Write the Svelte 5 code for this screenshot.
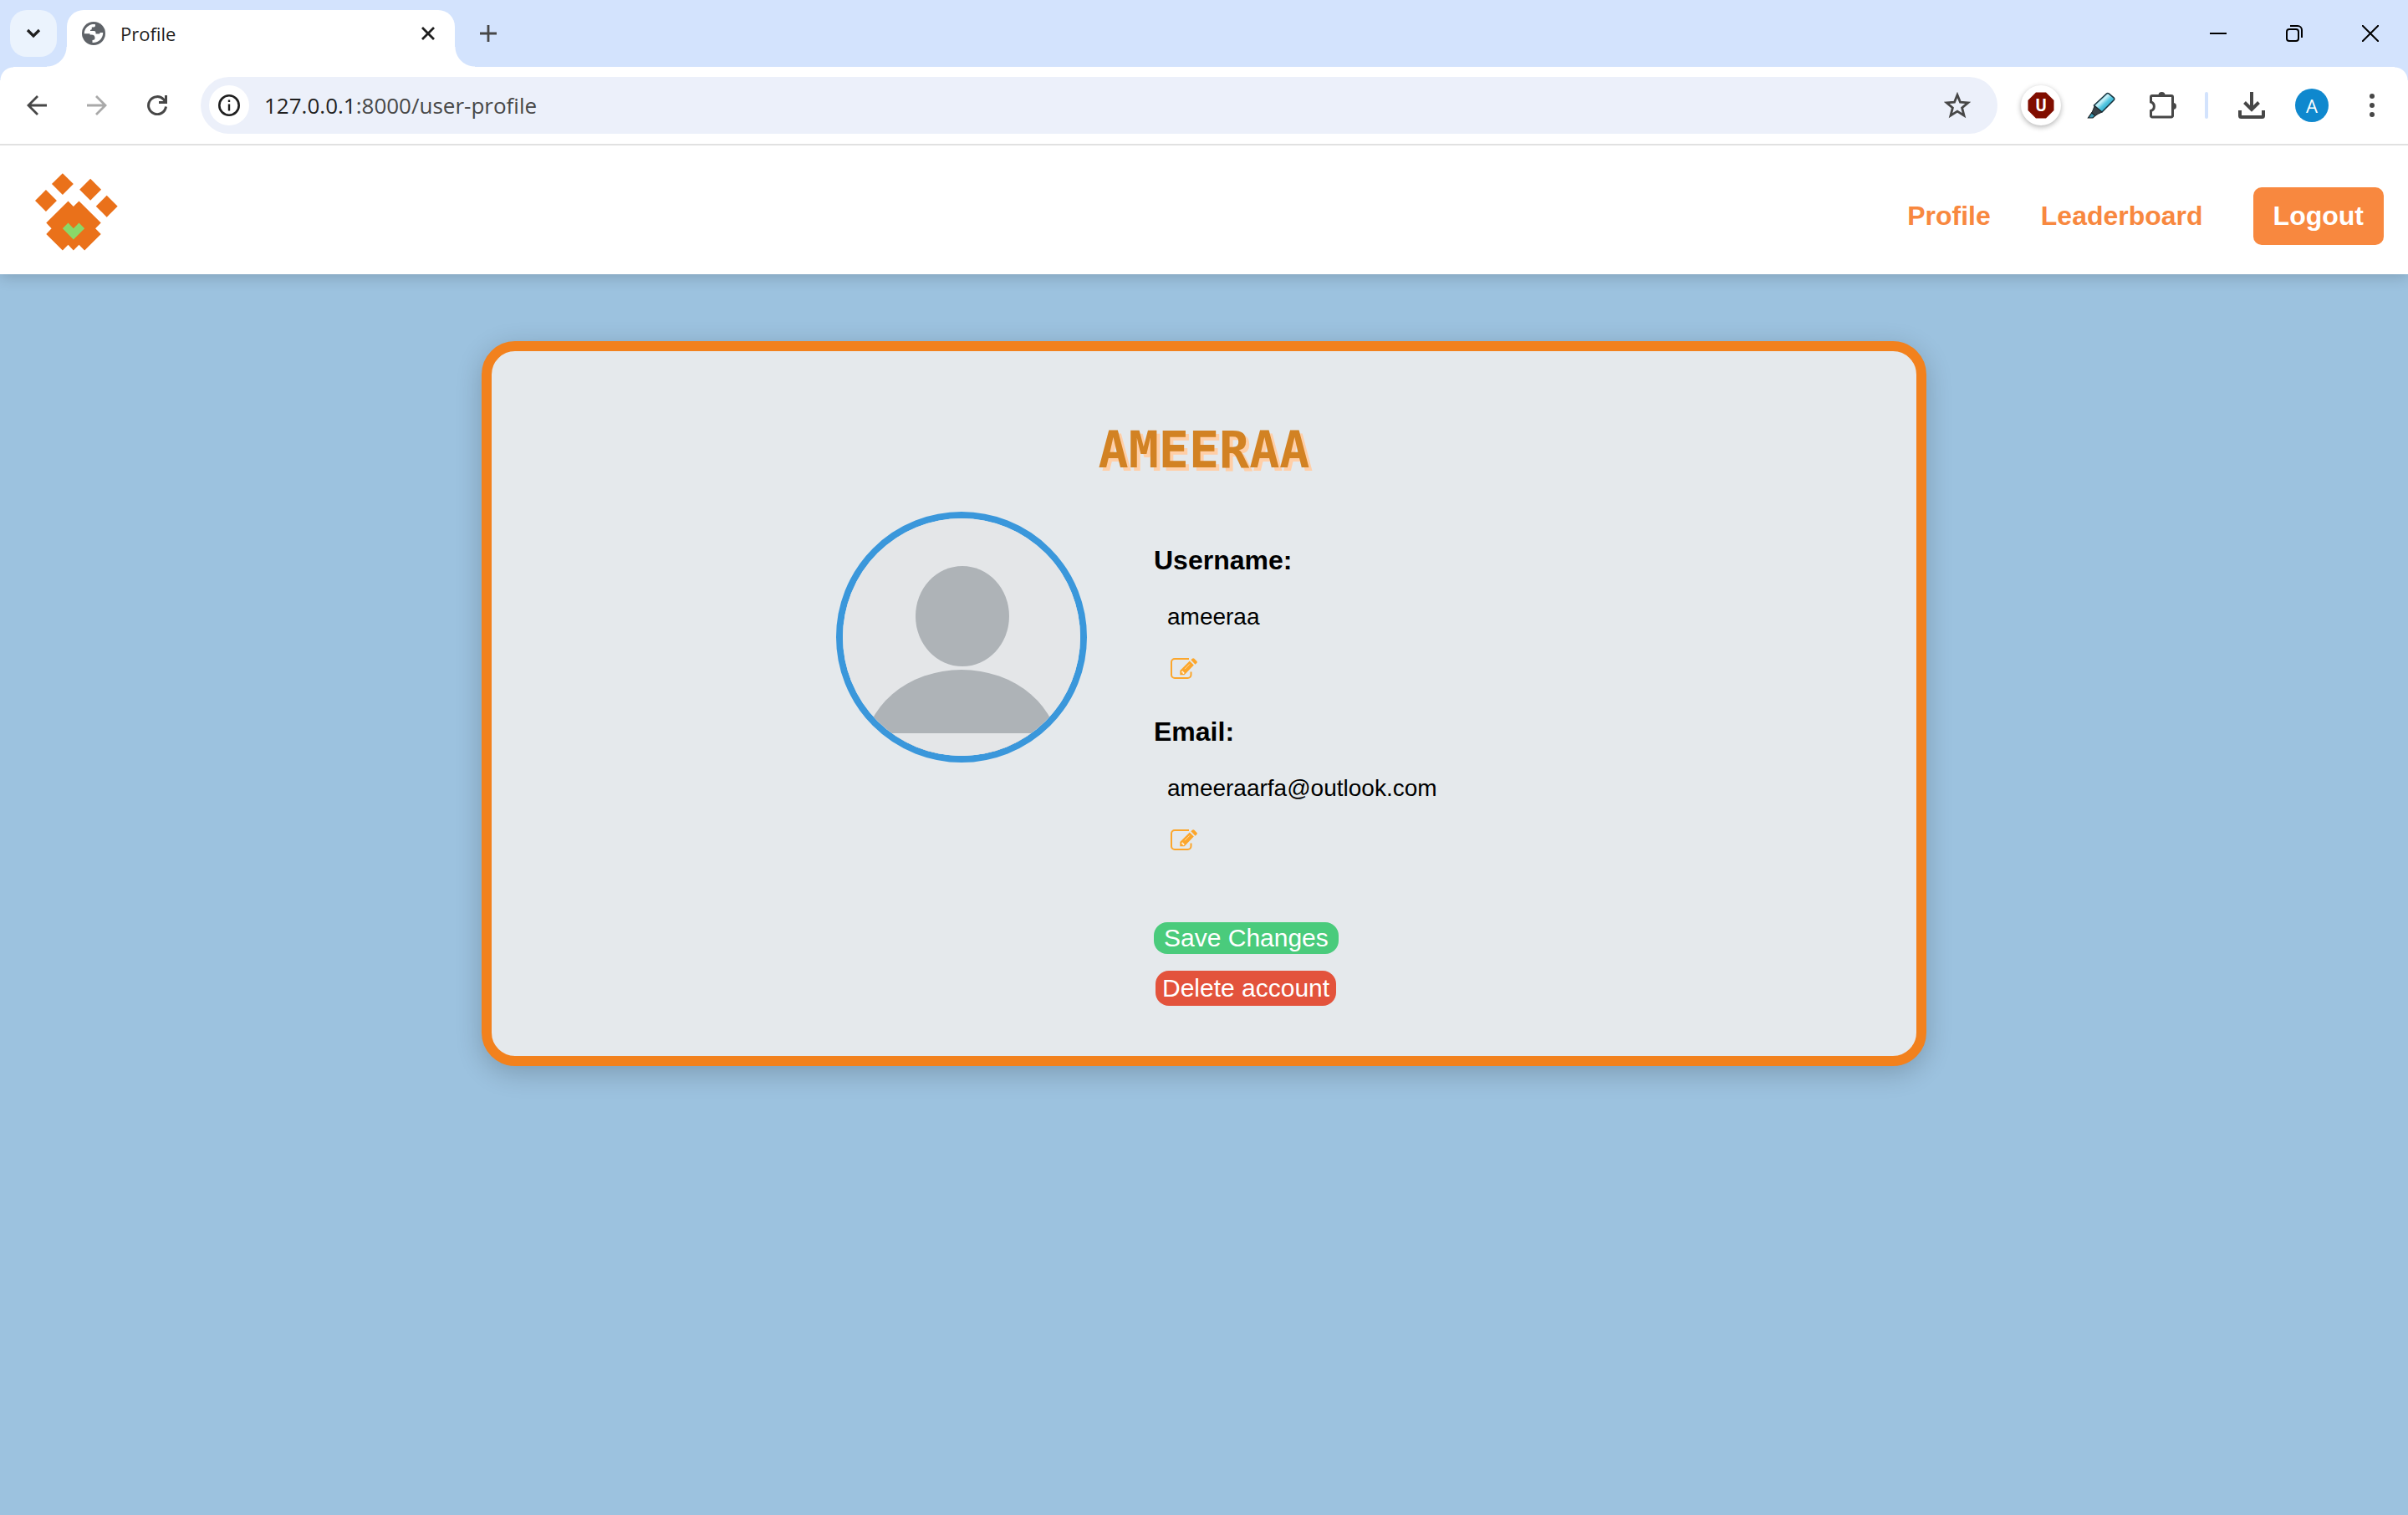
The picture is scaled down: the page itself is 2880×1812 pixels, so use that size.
<script>
  const toes = [[74, 132], [134, 72], [234, 92], [293, 152]];
  let username = $state('ameeraa');
  let email = $state('ameeraarfa@outlook.com');
</script>

{#snippet editIcon()}
  <svg width="32" height="25" viewBox="0 0 32 25" aria-hidden="true">
    <path d="M22 1H5a4 4 0 0 0-4 4v15a4 4 0 0 0 4 4h15.500a4 4 0 0 0 4-4v-3.500" fill="none" stroke="#fca62b" stroke-width="2" />
    <path d="M11.300 20.300v-5.300L22.800 3.600l5 5L16.500 20.300z" fill="#fca62b" />
    <path d="M24.300 2.300 26 .7q1.200-1 2.400 0l2.900 3q1.200 1.200 0 2.400l-1.700 1.600z" fill="#fca62b" />
    <path d="M13.200 16.200l1-.9 2.600 2.600-1 1h-1.200v-1.400h-1.400z" fill="#fff3e0" />
    <path d="M17 13.200l5.800-5.800" stroke="#fdd9a4" stroke-width="1" />
  </svg>
{/snippet}

<div class="window">
  <div class="tabstrip">
    <button class="tab-search" aria-label="Search tabs">
      <svg width="18" height="12" viewBox="0 0 18 12"><path d="M2 2l7 7 7-7" fill="none" stroke="#1f1f1f" stroke-width="3.200" /></svg>
    </button>
    <div class="tab">
      <svg width="28" height="28" viewBox="0 0 28 28" aria-hidden="true">
        <circle cx="14" cy="14" r="14" fill="#5f6368" />
        <path d="M2.700 14.200C2.700 10 5 6.600 8.500 4.500 11 3.200 13.500 2.900 16 3.200v1.300q0 2-2 2h-2.200v2q0 1.200-1.800 1.200v1.300h4.500q2 0 2 2v1.600h3.700q1.500 0 1.500-1.500h3.500C25.300 19 21 25.300 12.500 25.100V22q3 0 3-2.500 0-4-4-4H9.500v-1.300z" fill="#fff" />
      </svg>
      <span class="tab-title">Profile</span>
      <button class="tab-close" aria-label="Close tab">
        <svg width="18" height="18" viewBox="0 0 18 18"><path d="M2 2l14 14M16 2L2 16" stroke="#1f1f1f" stroke-width="2.800" /></svg>
      </button>
    </div>
    <button class="new-tab" aria-label="New tab">
      <svg width="20" height="20" viewBox="0 0 20 20"><path d="M10 0v20M0 10h20" stroke="#474747" stroke-width="2.800" /></svg>
    </button>
    <div class="window-controls">
      <button aria-label="Minimize"><svg width="20" height="20" viewBox="0 0 20 20"><path d="M0 10h20" stroke="#000" stroke-width="2" /></svg></button>
      <button aria-label="Restore">
        <svg width="20" height="20" viewBox="0 0 20 20" fill="none" stroke="#000" stroke-width="2"><rect x="1" y="5" width="14" height="14" rx="3" /><path d="M5 1h9a5 5 0 0 1 5 5v9" /></svg>
      </button>
      <button aria-label="Close"><svg width="20" height="20" viewBox="0 0 20 20"><path d="M0 0l20 20M20 0L0 20" stroke="#000" stroke-width="2" /></svg></button>
    </div>
  </div>

  <div class="toolbar">
    <button class="tool" aria-label="Back">
      <svg width="24" height="24" viewBox="0 0 24 24" fill="none" stroke="#474747" stroke-width="2.800"><path d="M24 12H2M13 1L2 12l11 11" /></svg>
    </button>
    <button class="tool" aria-label="Forward">
      <svg width="24" height="24" viewBox="0 0 24 24" fill="none" stroke="#a9a9a9" stroke-width="2.800"><path d="M0 12h22M11 1l11 11-11 11" /></svg>
    </button>
    <button class="tool" aria-label="Reload">
      <svg width="24" height="24" viewBox="0 0 24 24" fill="none" stroke="#474747" stroke-width="3"><path d="M22.500 13.500A10.500 10.500 0 1 1 19.800 5l2 3" /><path d="M22.500 0v8.500H14" /></svg>
    </button>
    <div class="omnibox">
      <button class="site-info" aria-label="View site information">
        <svg width="26" height="26" viewBox="0 0 26 26"><circle cx="13" cy="13" r="11.700" fill="none" stroke="#1f1f1f" stroke-width="2.600" /><path d="M13 11.500v8M13 6.500v2.600" stroke="#1f1f1f" stroke-width="2.400" /></svg>
      </button>
      <span class="url"><b>127.0.0.1</b>:8000/user-profile</span>
      <button class="tool" aria-label="Bookmark this tab">
        <svg width="32" height="32" viewBox="0 0 32 32"><path d="M16 3.500l3.500 8.700 9.300.7-7.200 6 2.400 9.200-8-5-8 5 2.400-9.200-7.200-6 9.300-.7z" fill="none" stroke="#474747" stroke-width="2.800" /></svg>
      </button>
    </div>
    <button class="tool" aria-label="uBlock Origin">
      <span class="ext-disc">
        <svg width="32" height="32" viewBox="0 0 32 32"><path d="M10 .5h12l9.500 9.500v12L22 31.500H10L.5 22V10z" fill="#800d00" /><text x="16" y="23" text-anchor="middle" class="shield-letter">U</text></svg>
      </span>
    </button>
    <button class="tool" aria-label="Highlighter">
      <svg width="34" height="32" viewBox="0 0 34 32">
        <defs><linearGradient id="ink" x1="0" y1="0" x2="1" y2="1"><stop offset="0.250" stop-color="#4cb4d2" /><stop offset="0.400" stop-color="#c9f1f8" /><stop offset="0.550" stop-color="#54c6e0" /><stop offset="0.800" stop-color="#1a9dc0" /></linearGradient></defs>
        <path d="M8.500 16 23.500 2q1.200-1.100 2.600-.2l6 5q1.200 1.200.3 2.700L18 24z" fill="url(#ink)" stroke="#17323c" stroke-width="1.500" />
        <path d="M9 17l9 7-4.500 2.200-3.700 2.300-4-3.500 1.500-3.500z" fill="#3a4349" stroke="#1b2327" stroke-width="1" />
        <path d="M5.700 25l4 3.500L7 31H1.500z" fill="#3999b4" stroke="#1b2327" stroke-width="1.200" />
      </svg>
    </button>
    <button class="tool" aria-label="Extensions">
      <svg width="36" height="34" viewBox="-4 0 36 34"><path d="M3 5.500h23a1.500 1.500 0 0 1 1.500 1.500v22.500a1.500 1.500 0 0 1-1.500 1.500H3a1.500 1.500 0 0 1-1.500-1.500V23.500a5.500 5.500 0 0 0 0-10.500V7A1.500 1.500 0 0 1 3 5.500z" fill="none" stroke="#474747" stroke-width="3" /><path d="M10.500 5a4 4 0 0 1 8 0zM28 14a4 4 0 0 1 0 8z" fill="#474747" /></svg>
    </button>
    <span class="divider"></span>
    <button class="tool" aria-label="Downloads">
      <svg width="32" height="32" viewBox="0 0 32 32" fill="none" stroke="#474747" stroke-width="4"><path d="M16 0v20M7.500 12.500L16 21l8.500-8.500M2 22v6.500a1.500 1.500 0 0 0 1.500 1.500h25a1.500 1.500 0 0 0 1.500-1.500V22" /></svg>
    </button>
    <button class="tool" aria-label="Account"><span class="account">A</span></button>
    <button class="tool" aria-label="Menu">
      <svg width="8" height="28" viewBox="0 0 8 28" fill="#474747"><circle cx="4" cy="3" r="3" /><circle cx="4" cy="14" r="3" /><circle cx="4" cy="25" r="3" /></svg>
    </button>
  </div>

  <header>
    <a class="logo" href="/" aria-label="Home">
      <svg width="99" height="93" viewBox="35 33 298 279">
        <g fill="#ea711a">
          {#each toes as [x, y]}
            <path d="M{x - 39} {y}l39-39 39 39-39 39z" />
          {/each}
          <path d="M154 133l19 20 20-20 79 79-20 20 20 20-59 59-20-20-20 20-19-20-20 20-59-59 19-20-19-20z" />
        </g>
        <path d="M154 212l19 20 20-20 20 20-40 40-39-40z" fill="#8ad868" />
      </svg>
    </a>
    <nav>
      <a href="/user-profile">Profile</a>
      <a href="/leaderboard">Leaderboard</a>
      <button class="logout">Logout</button>
    </nav>
  </header>

  <main>
    <section class="card">
      <h1>AMEERAA</h1>
      <div class="profile">
        <svg class="photo" viewBox="0 0 284 284" role="img" aria-label="Profile picture">
          <rect width="284" height="284" fill="#e4e6e8" />
          <g fill="#aeb3b7">
            <ellipse cx="143" cy="117" rx="56" ry="60" />
            <path d="M25 281a117 100 0 0 1 234 0z" />
          </g>
          <rect y="257" width="284" height="27" fill="#e4e6e8" />
        </svg>
        <form onsubmit={(e) => e.preventDefault()}>
          <div class="field">
            <label for="username">Username:</label>
            <input id="username" type="text" bind:value={username} />
            <button type="button" class="edit" aria-label="Edit username">{@render editIcon()}</button>
          </div>
          <div class="field">
            <label for="email">Email:</label>
            <input id="email" type="email" bind:value={email} />
            <button type="button" class="edit" aria-label="Edit email">{@render editIcon()}</button>
          </div>
          <div class="actions">
            <button type="submit" class="save">Save Changes</button>
            <button type="button" class="delete">Delete account</button>
          </div>
        </form>
      </div>
    </section>
  </main>
</div>

<style>
  :global(body) {
    margin: 0;
    background: #9cc2df;
  }
  .window {
    min-height: 100vh;
    display: flex;
    flex-direction: column;
    background: #9cc2df;
    font-family: "Liberation Sans", Arial, sans-serif;
  }
  button {
    border: 0;
    padding: 0;
    background: none;
    font: inherit;
    color: inherit;
    cursor: pointer;
  }
  svg {
    display: block;
    flex: none;
  }

  /* browser chrome */
  .tabstrip {
    display: flex;
    height: 80px;
    background: #d3e3fd;
    font-family: "Open Sans", "Noto Sans", sans-serif;
  }
  .tabstrip button {
    display: flex;
    align-items: center;
    justify-content: center;
  }
  .tab-search {
    width: 56px;
    height: 56px;
    margin: 12px;
    border-radius: 20px;
    background: #ebf3fd;
  }
  .tab {
    position: relative;
    display: flex;
    align-items: center;
    gap: 18px;
    box-sizing: border-box;
    width: 464px;
    height: 68px;
    margin-top: 12px;
    padding: 0 16px 12px 18px;
    border-radius: 20px 20px 0 0;
    background: #fff;
    font-size: 22px;
    color: #1f1f1f;
  }
  .tab::before,
  .tab::after {
    content: "";
    position: absolute;
    bottom: 0;
    width: 24px;
    height: 24px;
  }
  .tab::before {
    right: 100%;
    background: radial-gradient(circle at 0 0, transparent 23px, #fff 24px);
  }
  .tab::after {
    left: 100%;
    background: radial-gradient(circle at 100% 0, transparent 23px, #fff 24px);
  }
  .tab-title {
    flex: 1;
  }
  .tab-close {
    width: 32px;
    height: 32px;
  }
  .new-tab {
    width: 80px;
    height: 80px;
  }
  .window-controls {
    display: flex;
    margin-left: auto;
  }
  .window-controls button {
    width: 91px;
  }
  .toolbar {
    display: flex;
    align-items: center;
    height: 92px;
    padding: 0 7px 0 8px;
    border-bottom: 2px solid #e1e1e1;
    background:
      radial-gradient(circle at 100% 100%, #fff 15px, #d3e3fd 16px) 0 0 / 16px 16px no-repeat,
      radial-gradient(circle at 0 100%, #fff 15px, #d3e3fd 16px) 100% 0 / 16px 16px no-repeat,
      #fff;
    font-family: "Open Sans", "Noto Sans", sans-serif;
    position: relative;
    z-index: 1;
  }
  .tool {
    display: flex;
    flex: none;
    align-items: center;
    justify-content: center;
    width: 72px;
    height: 68px;
  }
  .omnibox {
    display: flex;
    flex: 1;
    align-items: center;
    height: 68px;
    margin: 0 16px;
    padding: 0 12px 0 10px;
    border-radius: 34px;
    background: #ecf0fa;
  }
  .site-info {
    display: flex;
    align-items: center;
    justify-content: center;
    width: 48px;
    height: 48px;
    border-radius: 50%;
    background: #fff;
  }
  .url {
    flex: 1;
    padding-left: 18px;
    font-size: 26px;
    color: #474747;
  }
  .url b {
    font-weight: 400;
    color: #1f1f1f;
  }
  .ext-disc {
    display: flex;
    align-items: center;
    justify-content: center;
    width: 48px;
    height: 48px;
    border-radius: 50%;
    background: #fff;
    box-shadow: 0 2px 6px rgba(0, 0, 0, 0.3);
  }
  .shield-letter {
    font: 700 20px Roboto, sans-serif;
    fill: #fff;
  }
  .divider {
    width: 4px;
    height: 32px;
    margin: 0 16px;
    border-radius: 2px;
    background: #d3e3fd;
  }
  .account {
    width: 40px;
    height: 40px;
    border-radius: 50%;
    background: #0f88ce;
    color: #fff;
    font-size: 22px;
    line-height: 40px;
    text-align: center;
  }

  /* site */
  header {
    position: relative;
    display: flex;
    align-items: center;
    justify-content: space-between;
    height: 150px;
    padding: 4px 29px 0 42px;
    background: #fff;
    box-shadow: 0 4px 16px rgba(0, 0, 0, 0.16);
  }
  nav {
    display: flex;
    align-items: center;
    gap: 60px;
    padding-top: 10px;
    font-size: 32px;
    font-weight: 700;
  }
  nav a {
    color: #f8883f;
    text-decoration: none;
  }
  .logout {
    padding: 16px 24px;
    border-radius: 10px;
    background: #f8883f;
    color: #fff;
    line-height: 37px;
  }
  main {
    padding: 80px 20%;
  }
  .card {
    padding: 82px 0 60px;
    border: 12px solid #f2811d;
    border-radius: 40px;
    background: #e5e9ec;
    box-shadow: 0 8px 32px rgba(0, 0, 0, 0.2);
  }
  h1 {
    margin: 0 0 38px;
    font: 700 60px/72px "DejaVu Sans Mono", monospace;
    text-align: center;
    color: #d28223;
    text-shadow: 4px 4px 0 #ffcfa8;
  }
  .profile {
    display: flex;
    justify-content: center;
    align-items: flex-start;
    gap: 80px;
  }
  .photo {
    width: 284px;
    height: 284px;
    border: 8px solid #3a97db;
    border-radius: 50%;
  }
  form {
    display: flex;
    flex-direction: column;
    gap: 36px;
    width: 500px;
    padding-top: 38px;
  }
  .field {
    display: flex;
    flex-direction: column;
    align-items: flex-start;
  }
  label {
    font-size: 32px;
    font-weight: 700;
    line-height: 40px;
  }
  input {
    box-sizing: border-box;
    width: 100%;
    height: 40px;
    margin: 28px 0 21px;
    padding: 0 16px;
    border: 0;
    background: transparent;
    color: #000;
    font: 28px/40px "Liberation Sans", Arial, sans-serif;
  }
  .edit {
    display: flex;
    align-items: center;
    height: 40px;
    padding: 0 20px;
  }
  .actions {
    display: flex;
    flex-direction: column;
    align-items: flex-start;
    gap: 20px;
    padding-top: 43px;
  }
  .actions button {
    border-radius: 16px;
    color: #fff;
    font-size: 30px;
    line-height: 34px;
  }
  .save {
    padding: 2px 12px;
    background: #4acb7c;
  }
  .actions .delete {
    margin-left: 2px;
    padding: 4px 8px;
    background: #e3533c;
  }
</style>
